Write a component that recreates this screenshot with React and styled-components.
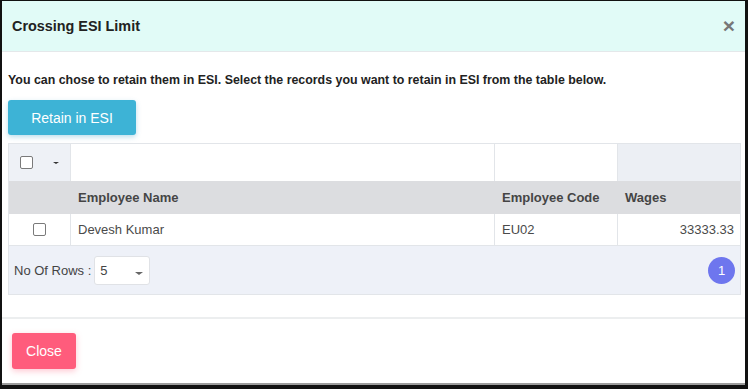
import React from "react";
import styled, { createGlobalStyle } from "styled-components";

const GlobalStyle = createGlobalStyle`
  html, body {
    margin: 0;
    padding: 0;
    background: #ffffff;
    font-family: "Liberation Sans", Arial, sans-serif;
  }
`;

const rows = [{ name: "Devesh Kumar", code: "EU02", wages: "33333.33" }];

export default function App() {
  return (
    <>
      <GlobalStyle />
      <Frame>
        <Modal>
          <Header>
            <Title>Crossing ESI Limit</Title>
            <CloseX>×</CloseX>
          </Header>
          <Body>
            <Intro>
              You can chose to retain them in ESI. Select the records you want
              to retain in ESI from the table below.
            </Intro>
            <RetainButton>Retain in ESI</RetainButton>
            <Table>
              <FilterRow>
                <SelectCell>
                  <Check />
                  <Caret />
                </SelectCell>
                <FilterCell />
                <FilterCell />
                <FilterCell $muted />
              </FilterRow>
              <HeadRow>
                <HeadCell />
                <HeadCell>Employee Name</HeadCell>
                <HeadCell>Employee Code</HeadCell>
                <HeadCell>Wages</HeadCell>
              </HeadRow>
              {rows.map((r) => (
                <DataRow key={r.code}>
                  <DataCell $center>
                    <Check />
                  </DataCell>
                  <DataCell>{r.name}</DataCell>
                  <DataCell>{r.code}</DataCell>
                  <DataCell $right>{r.wages}</DataCell>
                </DataRow>
              ))}
              <Pager>
                <RowsLabel>No Of Rows :</RowsLabel>
                <RowsSelect>
                  5
                  <Caret $size={4} $color="#666" />
                </RowsSelect>
                <PageDot>1</PageDot>
              </Pager>
            </Table>
          </Body>
          <Footer>
            <CloseButton>Close</CloseButton>
          </Footer>
        </Modal>
      </Frame>
    </>
  );
}

const Frame = styled.div`
  width: 748px;
  height: 389px;
  box-sizing: border-box;
  border-style: solid;
  border-color: #111;
  border-width: 1px 3px 4px 2px;
  background: #fff;
`;

const Modal = styled.div`
  height: 100%;
  box-sizing: border-box;
  border-bottom: 2px solid #9c9c9c;
  display: flex;
  flex-direction: column;
`;

const Header = styled.div`
  height: 51px;
  flex-shrink: 0;
  box-sizing: border-box;
  border-bottom: 1px solid #e4e8ea;
  background: #e1fbf7;
  display: flex;
  align-items: center;
  justify-content: space-between;
  padding: 0 10px 0 10px;
`;

const Title = styled.h4`
  margin: 0;
  font-size: 14.4px;
  font-weight: bold;
  color: #222;
`;

const CloseX = styled.span`
  font-size: 21px;
  font-weight: bold;
  color: #777;
  line-height: 1;
  margin-top: -2px;
`;

const Body = styled.div`
  flex-shrink: 0;
  padding: 20px 4px 0 6px;
  height: 267px;
  box-sizing: border-box;
  border-bottom: 2px solid #eceeef;
`;

const Intro = styled.p`
  margin: 0;
  font-size: 12.4px;
  line-height: 16px;
  font-weight: bold;
  color: #222;
`;

const RetainButton = styled.button`
  margin-top: 12px;
  width: 128px;
  height: 35px;
  border: none;
  border-radius: 3px;
  background: #3db3d6;
  color: #fff;
  font-family: inherit;
  font-size: 14px;
  box-shadow: 0 2px 5px rgba(60, 160, 200, 0.35);
`;

const Table = styled.div`
  margin-top: 8px;
  border: 1px solid #e2e5e9;
  display: grid;
  grid-template-columns: 62px 424px 123px 1fr;
`;

const FilterRow = styled.div`
  display: contents;
`;

const SelectCell = styled.div`
  height: 37px;
  background: #eef1f6;
  border-right: 1px solid #e2e5e9;
  display: flex;
  align-items: center;
  padding-left: 11px;
  gap: 20px;
`;

const FilterCell = styled.div`
  height: 37px;
  background: ${({ $muted }) => ($muted ? "#eceff4" : "#fff")};
  border-right: 1px solid #e2e5e9;
  &:last-child {
    border-right: none;
  }
`;

const HeadRow = styled.div`
  display: contents;
`;

const HeadCell = styled.div`
  height: 33px;
  background: #dcdde0;
  display: flex;
  align-items: center;
  padding-left: 7px;
  font-size: 13px;
  font-weight: bold;
  color: #454545;
`;

const DataRow = styled.div`
  display: contents;
`;

const DataCell = styled.div`
  height: 32px;
  box-sizing: border-box;
  border-right: 1px solid #e2e5e9;
  border-bottom: 1px solid #e2e5e9;
  display: flex;
  align-items: center;
  justify-content: ${({ $center, $right }) =>
    $center ? "center" : $right ? "flex-end" : "flex-start"};
  padding: ${({ $right, $center }) =>
    $center ? "0" : $right ? "0 6px 0 0" : "0 0 0 7px"};
  font-size: 13px;
  color: #4a4a4a;
  &:last-child {
    border-right: none;
  }
`;

const Check = styled.span`
  display: inline-block;
  width: 11px;
  height: 11px;
  border: 1px solid #7a7a7a;
  border-radius: 2px;
  background: #fff;
`;

const Caret = styled.span`
  display: inline-block;
  width: 0;
  height: 0;
  border-left: ${({ $size = 3 }) => $size}px solid transparent;
  border-right: ${({ $size = 3 }) => $size}px solid transparent;
  border-top: ${({ $size = 3 }) => $size - 1}px solid
    ${({ $color = "#333" }) => $color};
`;

const Pager = styled.div`
  grid-column: 1 / -1;
  height: 48px;
  background: #eef1f8;
  display: flex;
  align-items: center;
  padding: 0 5px 0 5px;
`;

const RowsLabel = styled.span`
  font-size: 13px;
  color: #444;
`;

const RowsSelect = styled.div`
  margin-left: 3px;
  width: 56px;
  height: 29px;
  box-sizing: border-box;
  border: 1px solid #e0e2e6;
  border-radius: 3px;
  background: #fff;
  display: flex;
  align-items: center;
  justify-content: space-between;
  padding: 0 6px 0 5px;
  font-size: 13px;
  color: #444;
  & > span {
    margin-top: 6px;
  }
`;

const PageDot = styled.span`
  margin-left: auto;
  width: 27px;
  height: 27px;
  border-radius: 50%;
  background: #6e76ee;
  color: #fff;
  font-size: 13px;
  display: flex;
  align-items: center;
  justify-content: center;
`;

const Footer = styled.div`
  padding: 14px 10px;
`;

const CloseButton = styled.button`
  width: 64px;
  height: 36px;
  border: none;
  border-radius: 3px;
  background: #ff5c7c;
  color: #fff;
  font-family: inherit;
  font-size: 14px;
  box-shadow: 0 2px 6px rgba(255, 92, 124, 0.35);
`;
